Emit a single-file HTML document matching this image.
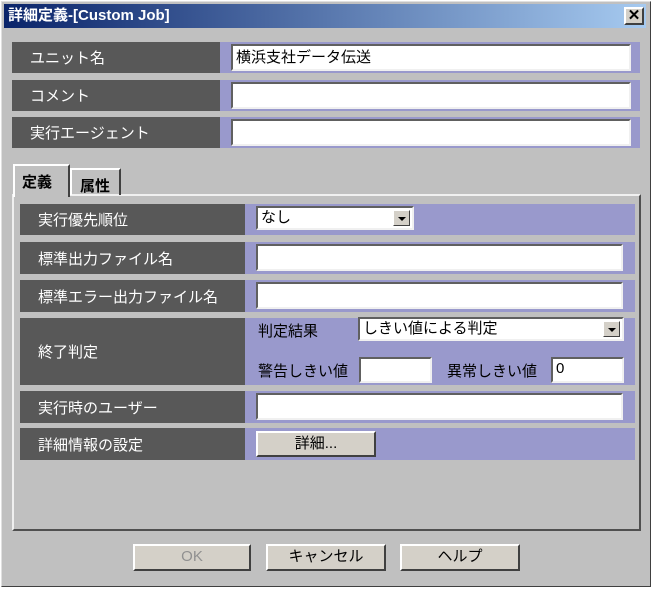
<!DOCTYPE html>
<html><head><meta charset="utf-8"><style>
*{box-sizing:border-box;margin:0;padding:0}
body{width:653px;height:589px;background:#fff;font-family:"Liberation Sans","Noto Sans CJK JP",sans-serif;font-size:15px;position:relative;overflow:hidden}
.a{position:absolute}
.win{left:1px;top:1px;width:650px;height:586px;background:#c0c0c0;border:1px solid;border-color:#e0e0e0 #404040 #404040 #e0e0e0}
.title{left:4px;top:4px;width:642px;height:24px;background:linear-gradient(90deg,#0a246a,#a6caf0);color:#fff;font-weight:bold;font-size:15px;line-height:24px;padding-left:4px}
.lab{background:#585858;color:#fff;padding-left:18px;display:flex;align-items:center}
.pur{background:#9999cc}
.inp{background:#fff;border:2px solid;border-color:#606060 #f0f0f0 #f0f0f0 #606060;font-size:15px;line-height:20px;padding-left:3px;color:#000}
.btn{background:#d4d0c8;border:2px solid;border-color:#fff #404040 #404040 #fff;text-align:center;font-size:15px;line-height:22px}
.dd{left:auto;right:2px;top:2px;width:17px;height:16px;background:#d4d0c8;border:1px solid;border-color:#fff #404040 #404040 #fff}
.dd:after{content:"";position:absolute;left:4px;top:6px;border:4px solid transparent;border-top:4px solid #000;border-bottom:0}
.t{color:#000}
</style></head><body>
<div class="a win"></div>
<div class="a title">詳細定義-[Custom Job]</div>
<div class="a btn" style="left:624px;top:7px;width:20px;height:18px;line-height:14px;font-weight:bold;font-size:15px">✕</div>

<div class="a lab" style="left:12px;top:42px;width:208px;height:31px">ユニット名</div>
<div class="a pur" style="left:220px;top:42px;width:420px;height:31px"></div>
<div class="a inp" style="left:231px;top:44px;width:400px;height:27px;line-height:23px">横浜支社データ伝送</div>
<div class="a lab" style="left:12px;top:80px;width:208px;height:31px">コメント</div>
<div class="a pur" style="left:220px;top:80px;width:420px;height:31px"></div>
<div class="a inp" style="left:231px;top:82px;width:400px;height:27px"></div>
<div class="a lab" style="left:12px;top:117px;width:208px;height:31px">実行エージェント</div>
<div class="a pur" style="left:220px;top:117px;width:420px;height:31px"></div>
<div class="a inp" style="left:231px;top:119px;width:400px;height:27px"></div>

<div class="a" style="left:12px;top:194px;width:629px;height:337px;border:2px solid;border-color:#f0f0f0 #505050 #505050 #f0f0f0"></div>
<div class="a" style="left:70px;top:168px;width:51px;height:27px;border:2px solid;border-color:#fff #404040 transparent #fff;border-bottom:0;font-weight:bold;padding:5px 0 0 8px">属性</div>
<div class="a" style="left:13px;top:164px;width:57px;height:33px;background:#c0c0c0;border:2px solid;border-color:#fff #404040 transparent #fff;border-bottom:0;font-weight:bold;padding:5px 0 0 7px">定義</div>

<div class="a lab" style="left:20px;top:204px;width:225px;height:31px">実行優先順位</div>
<div class="a pur" style="left:245px;top:204px;width:390px;height:31px"></div>
<div class="a inp" style="left:256px;top:206px;width:158px;height:24px">なし<div class="a dd"></div></div>

<div class="a lab" style="left:20px;top:242px;width:225px;height:32px">標準出力ファイル名</div>
<div class="a pur" style="left:245px;top:242px;width:390px;height:32px"></div>
<div class="a inp" style="left:256px;top:244px;width:367px;height:27px"></div>

<div class="a lab" style="left:20px;top:280px;width:225px;height:32px">標準エラー出力ファイル名</div>
<div class="a pur" style="left:245px;top:280px;width:390px;height:32px"></div>
<div class="a inp" style="left:256px;top:282px;width:367px;height:27px"></div>

<div class="a lab" style="left:20px;top:318px;width:225px;height:67px">終了判定</div>
<div class="a pur" style="left:245px;top:318px;width:390px;height:67px"></div>
<div class="a t" style="left:258px;top:320px">判定結果</div>
<div class="a inp" style="left:358px;top:317px;width:266px;height:24px">しきい値による判定<div class="a dd"></div></div>
<div class="a t" style="left:258px;top:360px">警告しきい値</div>
<div class="a inp" style="left:359px;top:357px;width:73px;height:26px"></div>
<div class="a t" style="left:447px;top:360px">異常しきい値</div>
<div class="a inp" style="left:551px;top:357px;width:73px;height:26px">0</div>

<div class="a lab" style="left:20px;top:391px;width:225px;height:32px">実行時のユーザー</div>
<div class="a pur" style="left:245px;top:391px;width:390px;height:32px"></div>
<div class="a inp" style="left:256px;top:393px;width:367px;height:27px"></div>

<div class="a lab" style="left:20px;top:428px;width:225px;height:32px">詳細情報の設定</div>
<div class="a pur" style="left:245px;top:428px;width:390px;height:32px"></div>
<div class="a btn" style="left:256px;top:431px;width:120px;height:26px">詳細...</div>

<div class="a btn" style="left:133px;top:544px;width:118px;height:27px;color:#909090">OK</div>
<div class="a btn" style="left:266px;top:544px;width:120px;height:27px">キャンセル</div>
<div class="a btn" style="left:400px;top:544px;width:120px;height:27px">ヘルプ</div>
</body></html>
